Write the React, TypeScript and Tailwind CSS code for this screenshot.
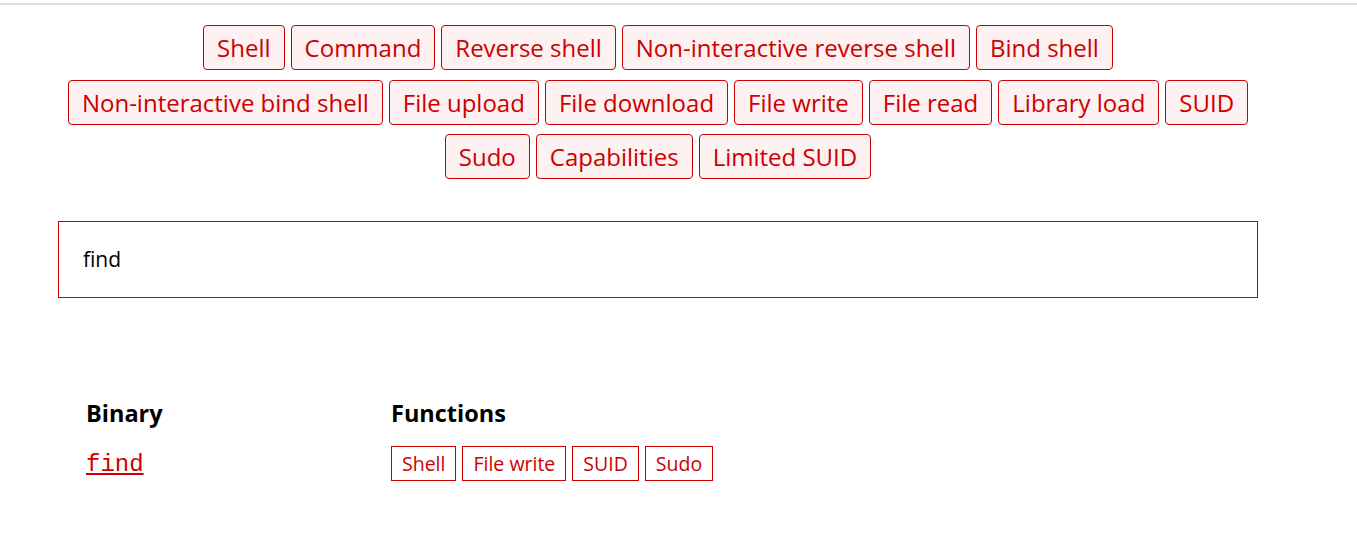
const rows = [
  ["Shell", "Command", "Reverse shell", "Non-interactive reverse shell", "Bind shell"],
  [
    "Non-interactive bind shell",
    "File upload",
    "File download",
    "File write",
    "File read",
    "Library load",
    "SUID",
  ],
  ["Sudo", "Capabilities", "Limited SUID"],
];

const functions = ["Shell", "File write", "SUID", "Sudo"];

export default function App() {
  return (
    <div className="min-h-screen bg-white font-['Open_Sans',sans-serif] text-black">
      <div className="mt-[3px] h-[2px] bg-[#e0e0e0]" />

      <div className="ml-[58px] w-[1200px]">
        <div className="mt-[20px] flex flex-col gap-[9.5px]">
          {rows.map((row, i) => (
            <div key={i} className="flex justify-center gap-[6px]">
              {row.map((label) => (
                <button
                  key={label}
                  className="h-[45px] rounded-[4px] border border-[#cc0000] bg-[#fdf1f1] px-[13px] text-[24px] leading-[43px] text-[#cc0000]"
                >
                  {label}
                </button>
              ))}
            </div>
          ))}
        </div>

        <div className="mt-[42px] flex h-[77px] items-center border border-[#cc0000] px-[24px] text-[21px]">
          find
        </div>

        <table className="ml-[28px] mt-[100px] border-collapse text-left">
          <thead>
            <tr>
              <th className="w-[305px] p-0 text-[23.5px] font-bold leading-[30px]">Binary</th>
              <th className="p-0 text-[23.5px] font-bold leading-[30px]">Functions</th>
            </tr>
          </thead>
          <tbody>
            <tr>
              <td className="pt-[19px] align-middle">
                <a
                  href="#"
                  className="font-['Liberation_Mono',monospace] text-[24px] text-[#cc0000] underline decoration-[#cc0000]"
                >
                  find
                </a>
              </td>
              <td className="pt-[15px]">
                <div className="flex gap-[6px]">
                  {functions.map((f) => (
                    <span
                      key={f}
                      className="h-[35px] border border-[#cc0000] px-[10px] text-[19.5px] leading-[33px] text-[#cc0000]"
                    >
                      {f}
                    </span>
                  ))}
                </div>
              </td>
            </tr>
          </tbody>
        </table>
      </div>
    </div>
  );
}
